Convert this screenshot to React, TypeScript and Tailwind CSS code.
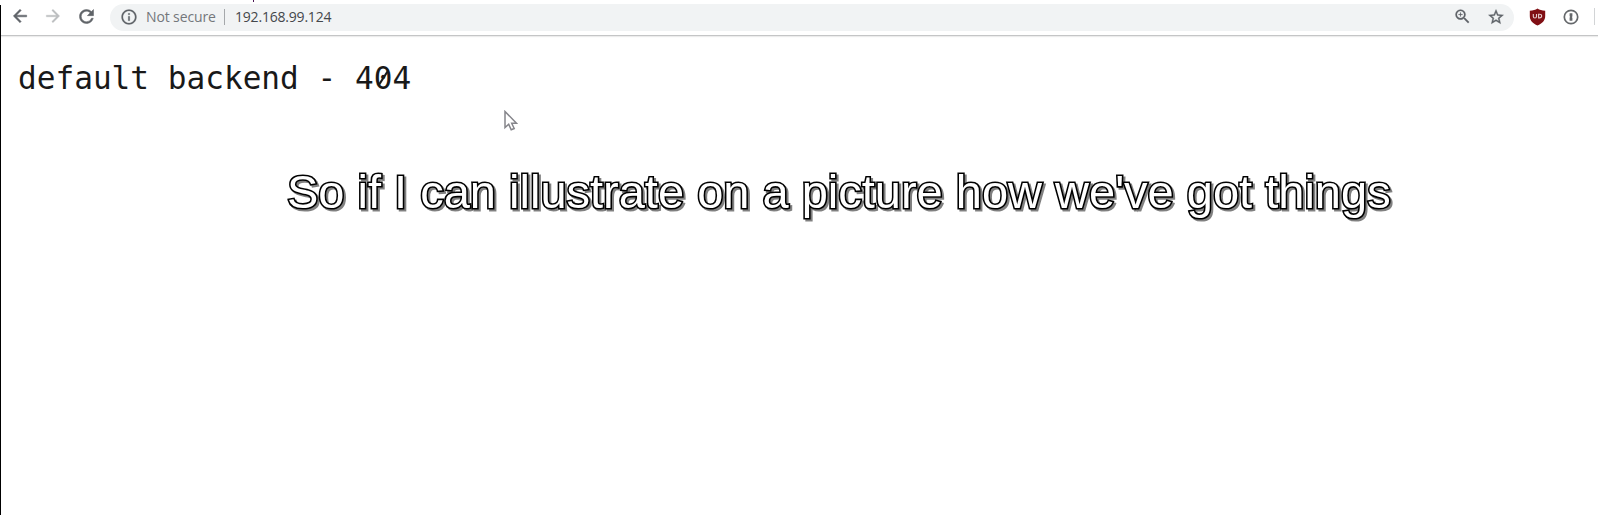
import React from "react";
import { MdArrowBack, MdArrowForward, MdRefresh, MdInfoOutline, MdZoomIn, MdStarBorder } from "react-icons/md";

function Toolbar() {
  return (
    <header className="mt-[4px] flex h-[32px] items-start border-b border-[#c4c5c6] bg-white shadow-[0_1px_1px_#ececec]">
      <nav className="flex h-full w-[110px] shrink-0 items-start pt-[2px] text-[#5f6368]">
        <MdArrowBack className="ml-[10px] size-[20px] stroke-current stroke-[0.6] [&>path[fill=none]]:stroke-none" />
        <MdArrowForward className="ml-[13px] size-[20px] stroke-current stroke-[0.4] text-[#bcbec0] [&>path[fill=none]]:stroke-none" />
        <MdRefresh className="ml-[13px] size-[21px] stroke-current stroke-[0.6] [&>path[fill=none]]:stroke-none" />
      </nav>
      <div className="flex h-[27px] w-[1404px] shrink-0 items-center rounded-r-full rounded-l-full bg-[#f1f3f4] pb-[2px] font-['Open_Sans',sans-serif] text-[14px] text-[#5f6368]">
        <MdInfoOutline className="ml-[10px] size-[18px] stroke-current stroke-[0.3] [&>path[fill=none]]:stroke-none" />
        <span className="ml-[8px] w-[72px] whitespace-nowrap tracking-[-0.12px] text-[#74777b]">Not secure</span>
        <span className="ml-[6px] h-[16px] w-px bg-[#a5a8ab]" />
        <span className="ml-[10px] whitespace-nowrap tracking-[-0.2px] text-[#44474b]">192.168.99.124</span>
        <MdZoomIn className="ml-auto size-[19px] stroke-current stroke-[0.2] [&>path[fill=none]]:stroke-none" />
        <MdStarBorder className="ml-[15px] mr-[9px] size-[18px] stroke-current stroke-[0.5] [&>path[fill=none]]:stroke-none" />
      </div>
      <div className="flex h-[27px] items-center pb-[2px]">
        <svg className="ml-[15px] h-[18px] w-[17px]" viewBox="0 0 17 18">
          <path d="M8.5.5C6.5 2 4 2.5.8 2.7V8c0 4.600 3 7.300 7.700 9.500C13.200 15.300 16.200 12.600 16.200 8V2.700C13 2.500 10.500 2 8.500.5Z" fill="#800f14" />
          <path d="M4.300 6v2.500q0 1.500 1.600 1.500t1.600-1.500V6M9.600 6.200v3.700h.8c3 0 3-3.700 0-3.700Z" fill="none" stroke="#e5cccd" strokeWidth="1.100" />
        </svg>
        <svg className="ml-[17px] size-[16px]" viewBox="0 0 16 16">
          <circle cx="8" cy="8" r="6.700" fill="none" stroke="#65686b" strokeWidth="1.700" />
          <path d="M6.600 4.200h2.800v3.200l-.6.6.6.8v3H6.600V8.600l.6-.6-.6-.8Z" fill="#65686b" />
        </svg>
        <span className="ml-[15px] h-[17px] w-px bg-[#d2d4d6]" />
      </div>
    </header>
  );
}

export default function App() {
  return (
    <div className="relative h-[515px] w-[1598px] overflow-hidden bg-white">
      <div className="absolute left-0 top-[5px] z-10 h-[510px] w-px bg-black" />
      <div className="absolute left-[253px] top-0 z-10 h-[2px] w-px bg-[#4b1655]" />
      <Toolbar />
      <main>
        <pre className="relative ml-[18px] mt-[24px] h-[36px] w-max font-['DejaVu_Sans_Mono',monospace] text-[31.1px] leading-[36px] text-[#191919]">
          default backend - 404
          <svg className="absolute right-[18.7px] top-0 h-[36px] w-[18.7px]" viewBox="0 0 18.7 36">
            <path d="M4.500 25.500 14.200 10.500" stroke="#191919" strokeWidth="2.200" />
          </svg>
        </pre>
      </main>
      <svg className="absolute left-[504px] top-[110px] h-[22px] w-[14px]" viewBox="0 0 14 22">
        <path d="M1 1.500v16l3.700-3.300 2.500 5.600 3-1.300-2.500-5.300h4.800Z" fill="#fff" stroke="#85858b" strokeWidth="1.500" />
      </svg>
      <p className="absolute left-[287px] top-[165px] whitespace-nowrap font-['Liberation_Sans',sans-serif] text-[47px] leading-[54px] text-white [-webkit-text-stroke:3.2px_#000] [paint-order:stroke_fill] drop-shadow-[2px_2px_0_#808080]">
        So if I can illustrate on a picture how we've got things
      </p>
    </div>
  );
}
